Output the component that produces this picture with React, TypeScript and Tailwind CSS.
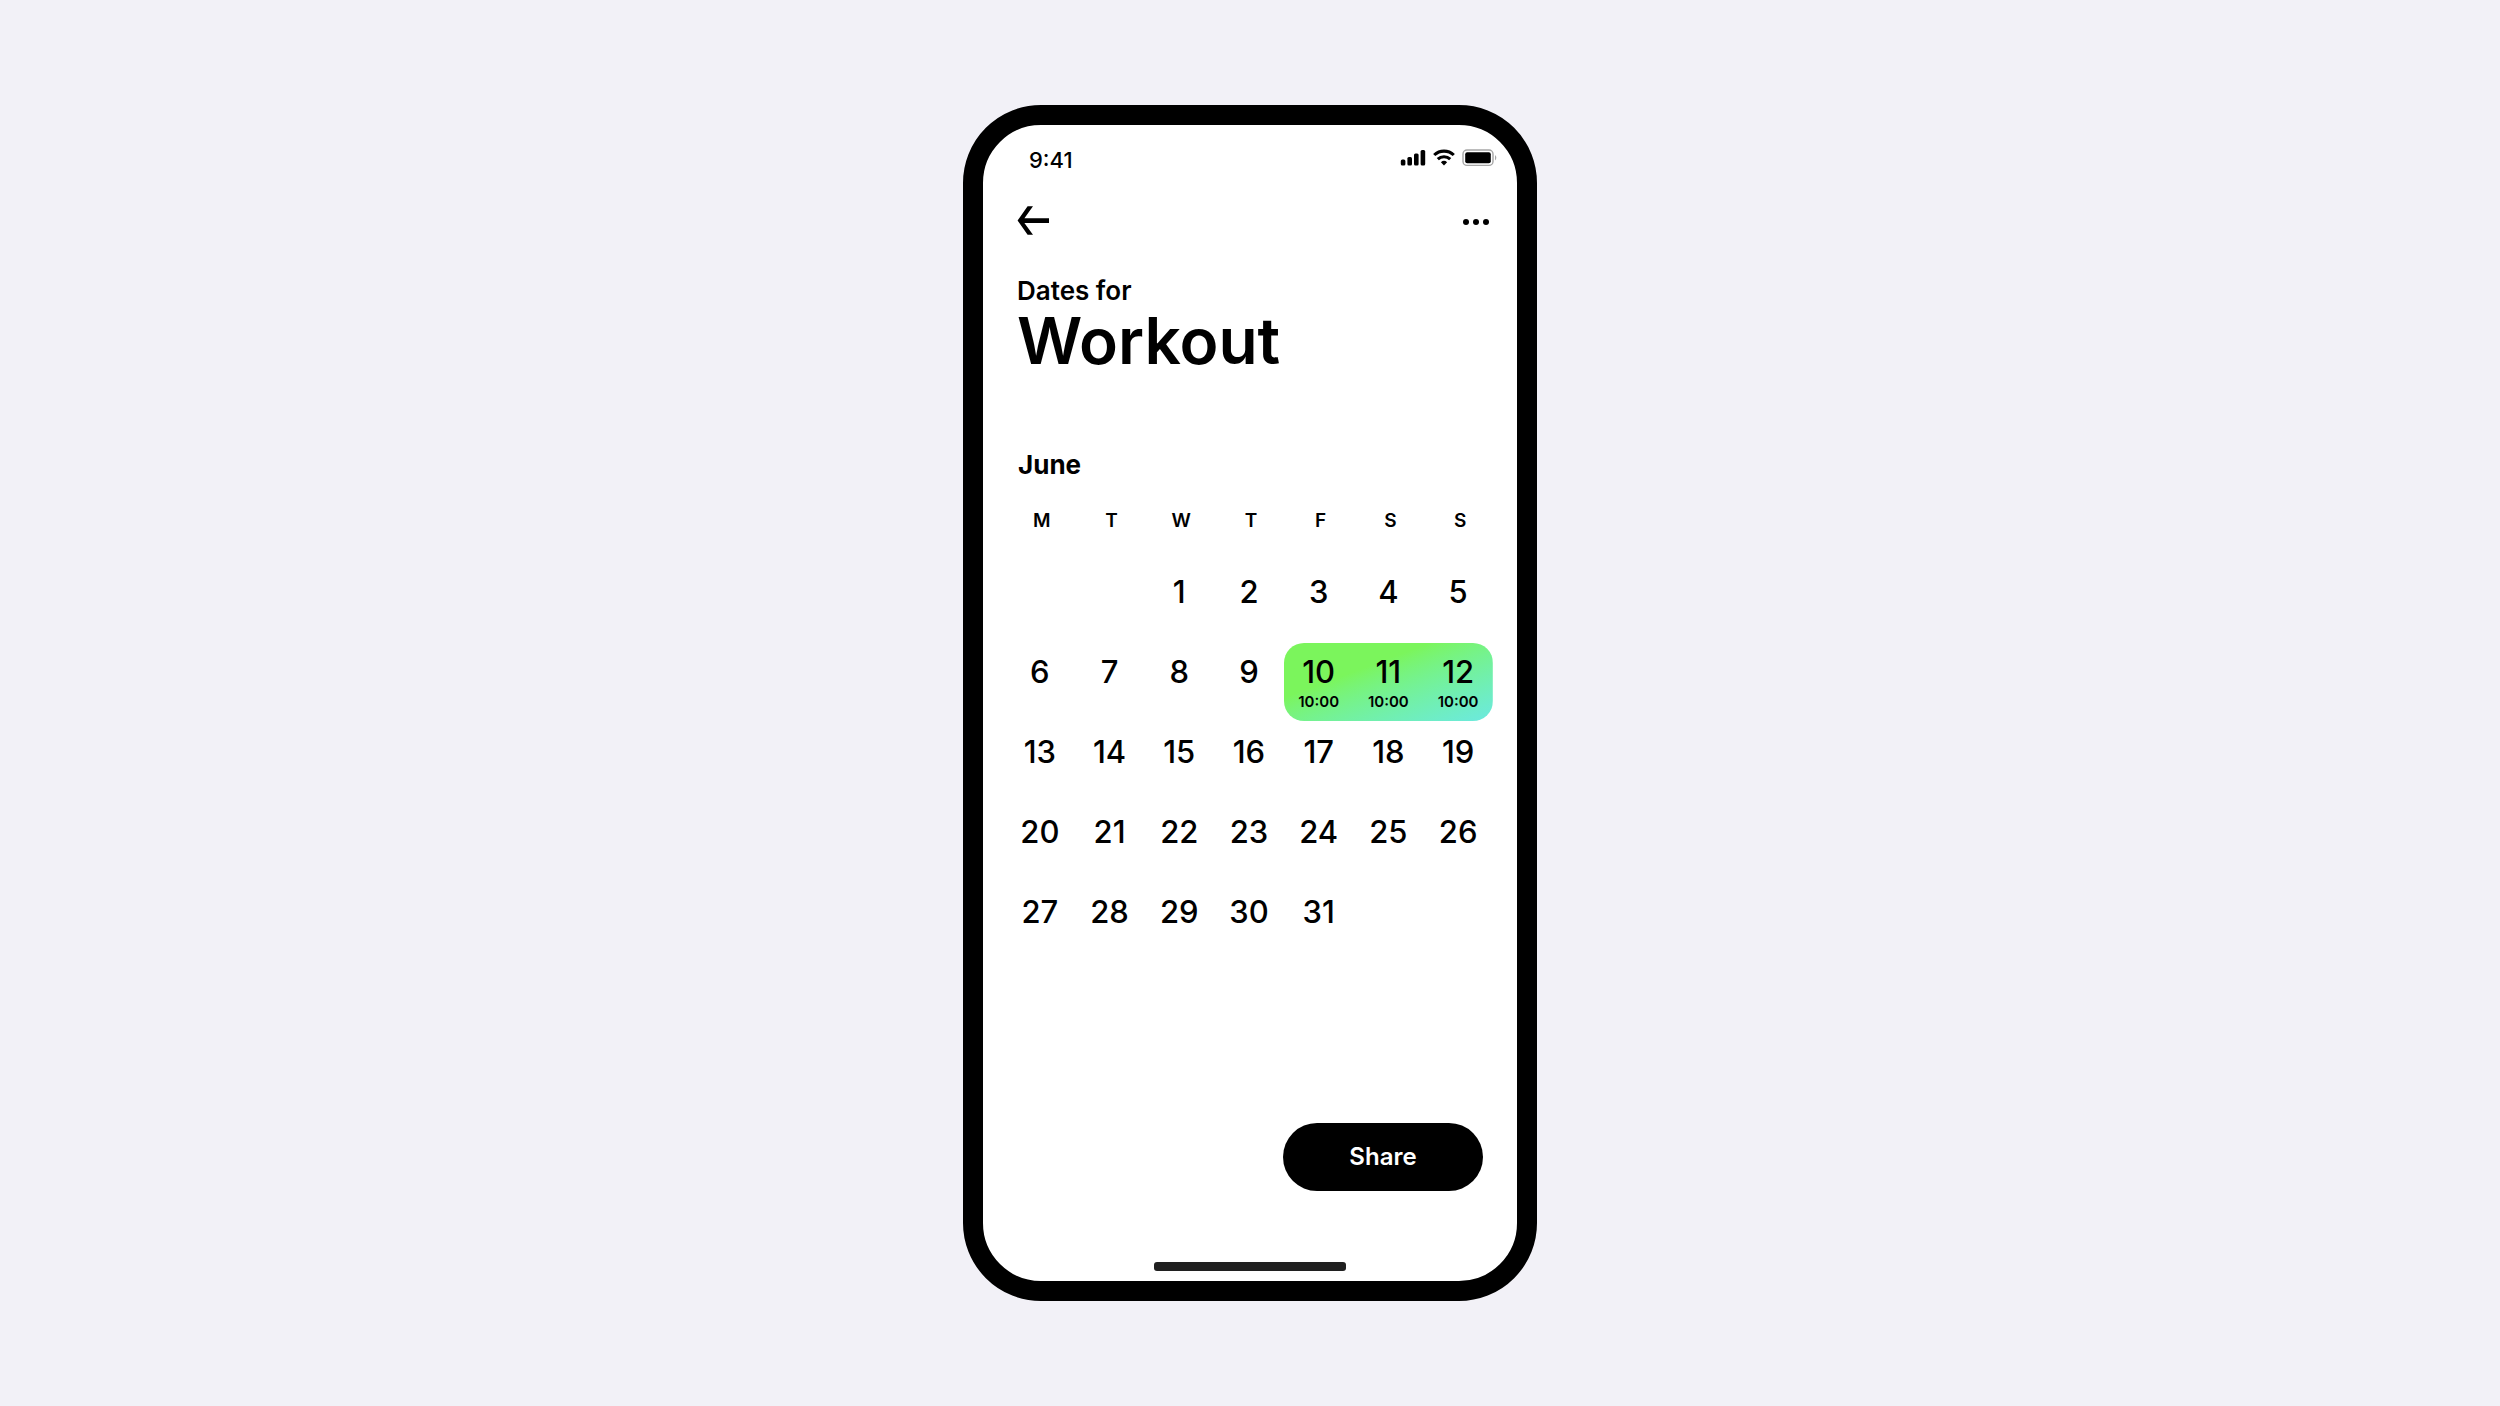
import { useState } from "react";
import { clsx } from "clsx";

interface Slot {
  day: number;
  time: string;
}

const weekdays = [
  { short: "M", name: "Monday" },
  { short: "T", name: "Tuesday" },
  { short: "W", name: "Wednesday" },
  { short: "T", name: "Thursday" },
  { short: "F", name: "Friday" },
  { short: "S", name: "Saturday" },
  { short: "S", name: "Sunday" },
];

const slots: Slot[] = [
  { day: 10, time: "10:00" },
  { day: 11, time: "10:00" },
  { day: 12, time: "10:00" },
];

// Month starts on Wednesday
const OFFSET = 2;
const DAYS = 31;

const weeks = Array.from({ length: 5 }, (_, week) =>
  Array.from({ length: 7 }, (_, i) => {
    const day = week * 7 + i - OFFSET + 1;
    return day > 0 && day <= DAYS ? day : null;
  })
);

function StatusBar() {
  return (
    <div className="flex items-start justify-between pt-5 pr-[19px] pl-[46px]">
      <span className="h-8 text-[22px] leading-[30px] font-medium">9:41</span>
      <div className="mt-1 flex items-center gap-[6px]">
        <svg width="26" height="18" viewBox="0 0 26 18" aria-hidden="true">
          <rect x="0.8" y="10.5" width="4.6" height="6" rx="1.5" />
          <rect x="7.4" y="8" width="4.6" height="8.5" rx="1.5" />
          <rect x="14" y="4.6" width="4.6" height="11.9" rx="1.5" />
          <rect x="20.6" y="1" width="4.6" height="15.5" rx="1.5" />
        </svg>
        <svg width="24" height="18" viewBox="0 0 24 18" aria-hidden="true">
          <g fill="none" stroke="#000" strokeWidth="3.1">
            <path d="M2.2 6 A14.2 14.2 0 0 1 21.8 6" />
            <path d="M5.8 10.2 A9 9 0 0 1 18.2 10.2" />
          </g>
          <path d="M12 16.6 L8.9 13.3 A4.5 4.5 0 0 1 15.1 13.3 Z" />
        </svg>
        <svg width="36" height="18" viewBox="0 0 36 18" aria-hidden="true">
          <rect x="1" y="1" width="30" height="15.4" rx="4" fill="none" stroke="#a6a6a6" strokeWidth="1.4" />
          <rect x="3.2" y="3.2" width="25.6" height="11" rx="2" />
          <path d="M33 6 A3.4 3.4 0 0 1 33 11.4 Z" fill="#a6a6a6" />
        </svg>
      </div>
    </div>
  );
}

function Calendar({ selected }: { selected: Slot[] }) {
  return (
    <table className="w-full table-fixed border-separate border-spacing-x-0 border-spacing-y-[2px]">
      <caption className="pb-[22px] pl-[13px] text-left text-[26px] leading-8 font-bold">June</caption>
      <thead>
        <tr>
          {weekdays.map((weekday) => (
            <th
              key={weekday.name}
              scope="col"
              abbr={weekday.name}
              className="h-14 p-0 pt-1 pl-1 align-top text-[19px] leading-6 font-semibold"
            >
              {weekday.short}
            </th>
          ))}
        </tr>
      </thead>
      <tbody>
        {weeks.map((week, index) => (
          <tr key={index}>
            {week.map((day, i) => {
              const slot = selected.findIndex((s) => s.day === day);
              return (
                <td
                  key={i}
                  className={clsx(
                    "h-[78px] p-0 pt-[9px] text-center align-top",
                    slot >= 0 &&
                      "bg-linear-to-br from-[#7bf55c] from-35% to-[#6ce9e0] to-100% bg-[length:300%_100%]",
                    slot === 0 && "rounded-l-[20px] bg-left",
                    slot === 1 && "bg-center",
                    slot === 2 && "rounded-r-[20px] bg-right"
                  )}
                >
                  {day !== null && (
                    <>
                      <div className="text-[31px] leading-10 font-medium">{day}</div>
                      {slot >= 0 && (
                        <div className="text-[15px] leading-5 font-semibold">{selected[slot].time}</div>
                      )}
                    </>
                  )}
                </td>
              );
            })}
          </tr>
        ))}
      </tbody>
    </table>
  );
}

export default function App() {
  const [selected] = useState<Slot[]>(slots);

  return (
    <main className="flex min-h-screen items-center justify-center bg-[#f2f1f7] font-['Inter',sans-serif] text-black">
      <div className="flex min-h-[1196px] w-full max-w-[574px] flex-col rounded-[78px] border-[20px] border-black bg-white">
        <StatusBar />

        <header className="flex items-center justify-between pt-7 pr-[27px] pl-[34px]">
          <button type="button" aria-label="Back">
            <svg width="34" height="32" viewBox="0 0 34 32" aria-hidden="true">
              <path d="M0.6 15.5 L10.6 1.2 H16 L7.4 13.2 H32 V17.9 H7.4 L16 29.8 H10.6 Z" />
            </svg>
          </button>
          <button type="button" aria-label="More options">
            <svg width="28" height="32" viewBox="0 0 28 32" aria-hidden="true">
              <circle cx="4" cy="17" r="3" />
              <circle cx="14" cy="17" r="3" />
              <circle cx="24" cy="17" r="3" />
            </svg>
          </button>
        </header>

        <h1 className="mt-[38px] pl-[34px] font-semibold">
          <span className="block text-[26px] leading-8">Dates for</span>
          <span className="block text-[64px] leading-[68px]">Workout</span>
        </h1>

        <section className="mt-[74px] pr-6 pl-[22px]">
          <Calendar selected={selected} />
        </section>

        <div className="mt-auto flex justify-end pr-[34px]">
          <button
            type="button"
            className="h-[68px] w-[200px] rounded-full bg-black text-[24px] font-semibold text-white"
          >
            Share
          </button>
        </div>

        {/* Home indicator */}
        <div className="mx-auto mt-[71px] mb-[10px] h-[9px] w-48 rounded-[3px] bg-[#202020]" />
      </div>
    </main>
  );
}
